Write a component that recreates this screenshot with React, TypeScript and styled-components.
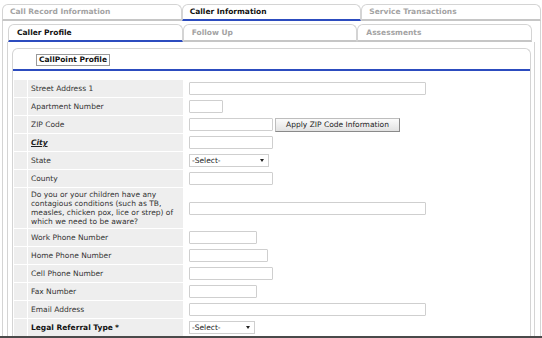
import styled, { createGlobalStyle } from 'styled-components';

const GlobalStyle = createGlobalStyle`
  html, body {
    margin: 0;
    padding: 0;
    background: #fff;
  }
  body {
    font-family: "DejaVu Sans", Verdana, sans-serif;
    font-size: 7.5px;
    color: #333;
  }
`;

const BLUE = '#2c4cbf';
const LINE = '#d4d4d4';

interface TabProps {
    $active?: boolean;
}

interface FieldRow {
    label: string;
    kind: 'text' | 'select' | 'zip';
    width: number;
    style?: 'city' | 'required';
    tall?: boolean;
}

const rows: FieldRow[] = [
    { label: 'Street Address 1', kind: 'text', width: 237 },
    { label: 'Apartment Number', kind: 'text', width: 34 },
    { label: 'ZIP Code', kind: 'zip', width: 84 },
    { label: 'City', kind: 'text', width: 84, style: 'city' },
    { label: 'State', kind: 'select', width: 80 },
    { label: 'County', kind: 'text', width: 84 },
    {
        label: 'Do you or your children have any contagious conditions (such as TB, measles, chicken pox, lice or strep) of which we need to be aware?',
        kind: 'text',
        width: 237,
        tall: true,
    },
    { label: 'Work Phone Number', kind: 'text', width: 68 },
    { label: 'Home Phone Number', kind: 'text', width: 79 },
    { label: 'Cell Phone Number', kind: 'text', width: 84 },
    { label: 'Fax Number', kind: 'text', width: 68 },
    { label: 'Email Address', kind: 'text', width: 237 },
    { label: 'Legal Referral Type', kind: 'select', width: 66, style: 'required' },
];

function App() {
    return (
        <>
            <GlobalStyle />
            <Page>
                <TabRow>
                    <TopTab>Call Record Information</TopTab>
                    <TopTab $active>Caller Information</TopTab>
                    <TopTab>Service Transactions</TopTab>
                </TabRow>
                <OuterBody>
                    <SubTabRow>
                        <SubTab $active>Caller Profile</SubTab>
                        <SubTab>Follow Up</SubTab>
                        <SubTab>Assessments</SubTab>
                    </SubTabRow>
                    <SubBody>
                        <Panel>
                            <PanelHeader>
                                <HeaderBox>CallPoint Profile</HeaderBox>
                            </PanelHeader>
                            <BlueRule />
                            <FormGrid>
                                {rows.map((row, index) => (
                                    <Row key={index} $tall={row.tall}>
                                        <Gutter />
                                        <Label $variant={row.style}>
                                            {row.style === 'city' ? (
                                                <CityText>{row.label}</CityText>
                                            ) : (
                                                row.label
                                            )}
                                            {row.style === 'required' && <Star>*</Star>}
                                        </Label>
                                        <Field>
                                            {row.kind === 'select' ? (
                                                <SelectBox style={{ width: row.width }}>
                                                    <span>-Select-</span>
                                                    <Arrow />
                                                </SelectBox>
                                            ) : (
                                                <TextInput type="text" style={{ width: row.width }} readOnly />
                                            )}
                                            {row.kind === 'zip' && (
                                                <ApplyButton type="button">Apply ZIP Code Information</ApplyButton>
                                            )}
                                        </Field>
                                    </Row>
                                ))}
                            </FormGrid>
                        </Panel>
                    </SubBody>
                </OuterBody>
            </Page>
        </>
    );
}

export default App;

const Page = styled.div`
    height: 338px;
    box-sizing: border-box;
    border-bottom: 2px solid #4a4a4a;
    overflow: hidden;
    padding: 4px 1px 0 2px;
`;

const TabRow = styled.div`
    display: flex;
    height: 17px;
`;

const TopTab = styled.div<TabProps>`
    flex: 1;
    box-sizing: border-box;
    border: 1px solid ${LINE};
    border-bottom: 2px solid ${({ $active }) => ($active ? BLUE : '#c6c6c6')};
    border-radius: 6px 6px 0 0;
    padding-left: 7px;
    font-weight: bold;
    line-height: 14px;
    color: ${({ $active }) => ($active ? '#111' : '#a3a3a3')};
    white-space: nowrap;
`;

const OuterBody = styled.div`
    border-left: 1px solid ${LINE};
    border-right: 1px solid ${LINE};
    padding: 3px 5px 0 4px;
`;

const SubTabRow = styled.div`
    display: flex;
    height: 18px;
    margin: 0 3px 0 1px;
`;

const SubTab = styled(TopTab)`
    line-height: 15px;
    padding-left: 8px;
`;

const SubBody = styled.div`
    border-left: 1px solid ${LINE};
    border-right: 1px solid ${LINE};
    padding: 6px 3px 0 4px;
`;

const Panel = styled.div`
    border: 1px solid ${LINE};
    border-bottom: none;
    border-radius: 6px 6px 0 0;
    padding-bottom: 20px;
`;

const PanelHeader = styled.div`
    display: flex;
    padding: 5px 0 0 23px;
`;

const HeaderBox = styled.div`
    box-sizing: border-box;
    height: 12px;
    padding: 0 2px;
    border: 1px solid #9a9a9a;
    font-weight: bold;
    line-height: 10px;
    color: #111;
`;

const BlueRule = styled.div`
    height: 2px;
    margin-top: 3px;
    background: ${BLUE};
`;

const FormGrid = styled.div`
    display: grid;
    grid-template-columns: 13px 155px 1fr;
    column-gap: 1px;
    row-gap: 1px;
    margin: 9px 1px 0 1px;
`;

const Row = styled.div<{ $tall?: boolean }>`
    display: contents;

    & > * {
        min-height: ${({ $tall }) => ($tall ? '40px' : '17px')};
    }
`;

const Gutter = styled.div`
    background: #eeeeee;
`;

const Label = styled.div<{ $variant?: 'city' | 'required' }>`
    display: flex;
    align-items: center;
    flex-wrap: wrap;
    box-sizing: border-box;
    padding: 2px 6px 2px 3px;
    background: #eeeeee;
    line-height: 9px;
    color: ${({ $variant }) => ($variant === 'required' ? '#111' : '#333')};
    font-weight: ${({ $variant }) => ($variant === 'required' ? 'bold' : 'normal')};
`;

const CityText = styled.span`
    font-weight: bold;
    font-style: italic;
    text-decoration: underline;
    color: #222;
`;

const Star = styled.span`
    margin-left: 2px;
`;

const Field = styled.div`
    display: flex;
    align-items: center;
    gap: 2px;
    padding-left: 5px;
    background: #fff;
`;

const TextInput = styled.input`
    box-sizing: border-box;
    height: 13px;
    margin: 0;
    padding: 0 2px;
    border: 1px solid #cfcfcf;
    border-radius: 1px;
    font: inherit;
    outline: none;
`;

const SelectBox = styled.div`
    box-sizing: border-box;
    display: flex;
    align-items: center;
    justify-content: space-between;
    height: 13px;
    padding: 0 4px 0 2px;
    border: 1px solid #cfcfcf;
    color: #222;
`;

const Arrow = styled.span`
    width: 0;
    height: 0;
    border-left: 2px solid transparent;
    border-right: 2px solid transparent;
    border-top: 3px solid #222;
`;

const ApplyButton = styled.button`
    box-sizing: border-box;
    width: 125px;
    height: 14px;
    margin: 0;
    padding: 0;
    border: 1px solid #bdbdbd;
    border-right-color: #8a8a8a;
    border-bottom-color: #8a8a8a;
    background: linear-gradient(#fbfbfb, #e2e2e2);
    font: inherit;
    color: #222;
`;
